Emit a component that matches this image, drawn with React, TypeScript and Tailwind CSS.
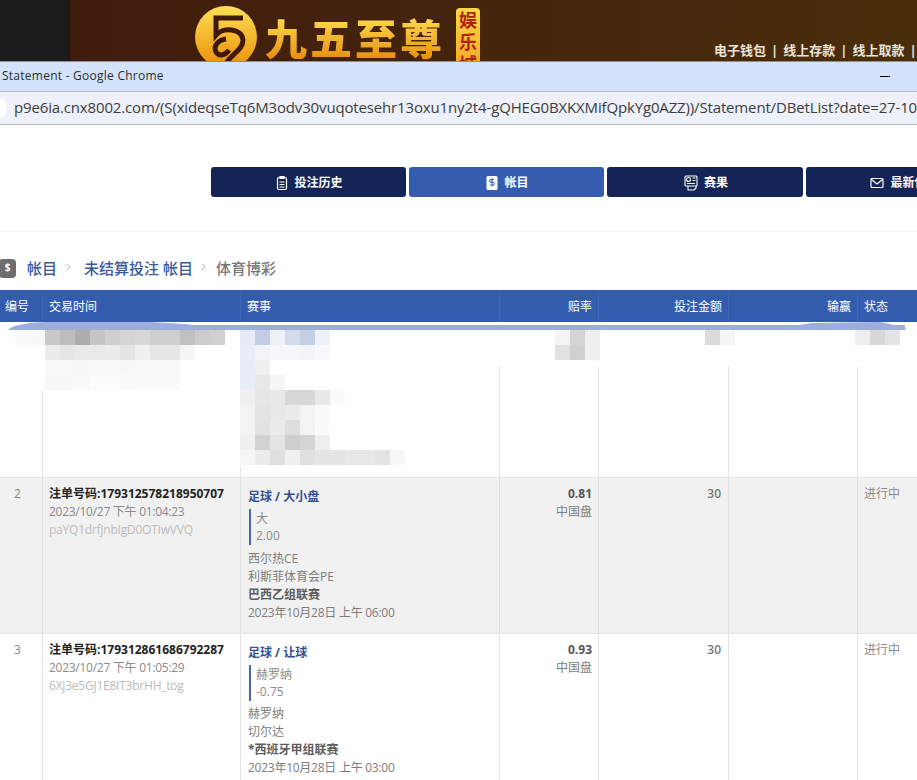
import React from "react";

const FONT = "[font-family:'Open_Sans','Noto_Sans_CJK_SC',sans-serif]";

const cell = "border-l border-[#e2e2e2]";

function HistoryIcon() {
  return (
    <svg width="12" height="16" viewBox="0 0 12 16" fill="none" stroke="#fff" strokeWidth="1.2">
      <rect x="1.5" y="2.5" width="9" height="12" rx="1.5" />
      <path d="M4 1.5h4v2H4zM3.5 7h5M3.5 9.5h5M3.5 12h5" />
    </svg>
  );
}
function LedgerIcon() {
  return (
    <svg width="12" height="16" viewBox="0 0 12 16">
      <rect x="0.5" y="1" width="11" height="14" rx="1.5" fill="#fff" />
      <path d="M8 4.5H5a1 1 0 0 0 0 2.8h2a1 1 0 0 1 0 2.8H4M6 3.5v8" fill="none" stroke="#355cae" strokeWidth="1" />
    </svg>
  );
}
function ResultIcon() {
  return (
    <svg width="14" height="16" viewBox="0 0 14 16" fill="none" stroke="#fff" strokeWidth="1.1">
      <rect x="1" y="1" width="12" height="10" rx="1" />
      <circle cx="4.5" cy="4.5" r="2" />
      <path d="M8.5 3h3M8.5 5.5h3M3 8.5h8M4 11v4h6l2-2v-2" />
    </svg>
  );
}
function MailIcon() {
  return (
    <svg width="14" height="12" viewBox="0 0 14 12" fill="none" stroke="#fff" strokeWidth="1.2">
      <rect x="1" y="1.5" width="12" height="9" rx="1" />
      <path d="M1.5 2.5 7 7l5.5-4.5" />
    </svg>
  );
}

function Tab({ label, icon, active, wide }: { label: string; icon: React.ReactNode; active?: boolean; wide?: boolean }) {
  return (
    <div
      className={`flex h-[30px] shrink-0 items-center justify-center gap-[6px] rounded-[3px] pl-[2px] pt-px text-xs font-bold text-white ${
        wide ? "w-[196px]" : "w-[195px]"
      } ${active ? "bg-[#355cae]" : "bg-[#142456]"}`}
    >
      {icon}
      <span className="whitespace-nowrap">{label}</span>
    </div>
  );
}

type Bet = {
  n: string; id: string; time: string; ref: string; sport: string; pick: string; hcp: string;
  home: string; away: string; league: string; date: string; odds: string; bg: string; h: string; mb: string;
};

function BetRow({ b }: { b: Bet }) {
  return (
    <div className={`grid grid-cols-[42px_198px_259px_99px_130px_129px_60px] border-b border-[#e2e2e2] text-xs leading-[18px] text-[#7c7c7c] ${b.bg} ${b.h}`}>
      <div className="pt-[7px] pl-[14px] text-[#888]">{b.n}</div>
      <div className={`${cell} pl-[6px] pt-[7px]`}>
        <div className="whitespace-nowrap font-bold text-[#222]">注单号码:{b.id}</div>
        <div className="whitespace-nowrap tracking-[-0.27px] text-[#8a8a8a]">{b.time}</div>
        <div className="whitespace-nowrap tracking-[-0.23px] text-[#bbb]">{b.ref}</div>
      </div>
      <div className={`${cell} pl-[7px] pt-[10px]`}>
        <div className="font-bold text-[#32508f]">{b.sport}</div>
        <div className={`ml-px mt-[3px] h-[36px] border-l-2 border-[#4a69ad] pl-[5px] pt-px text-[#8a8a8a] ${b.mb}`}>
          <div>{b.pick}</div>
          <div className="-mt-px">{b.hcp}</div>
        </div>
        <div>{b.home}</div>
        <div>{b.away}</div>
        <div className="font-bold text-[#5c5c5c]">{b.league}</div>
        <div className="whitespace-nowrap tracking-[-0.26px]">{b.date}</div>
      </div>
      <div className={`${cell} pr-[6px] pt-[7px] text-right`}>
        <div className="font-bold text-[#555]">{b.odds}</div>
        <div>中国盘</div>
      </div>
      <div className={`${cell} pr-[7px] pt-[7px] text-right font-semibold text-[#777]`}>30</div>
      <div className={cell} />
      <div className={`${cell} pl-[6px] pt-[7px] text-[#8a8a8a]`}>进行中</div>
    </div>
  );
}

const mosaic: [number, number, string[]][] = [
  [45, 330, ["#c8c8c8", "#bdbdbd", "#adadad", "#c5c5c5", "#cfcfcf", "#d5d5d5", "#d8d8d8", "#cfcfcf", "#cfcfcf", "#c0c0c0", "#cbcbcb", "#d0d0d0"]],
  [45, 345, ["#ececec", "#e6e6e6", "#eaeaea", "#eaeaea", "#ececec", "#e4e4e4", "#f0f0f0", "#e6e6e6", "#e6e6e6", "#f5f5f5"]],
  [45, 360, ["#f9f9f9", "#f9f9f9", "#f8f8f8", "#f9f9f9", "#f9f9f9", "#f8f8f8", "#f9f9f9", "#f9f9f9", "#f9f9f9"]],
  [45, 375, ["#f8f8f8", "#f8f8f8", "#f9f9f9", "#fcfcfc", "#fcfcfc", "#fbfbfb", "#f9f9f9", "#f9f9f9", "#f9f9f9"]],
  [15, 330, ["#fafafa", "#f8f8f8"]],
  [240, 330, ["#e6ebf5", "#c3cde3", "#eef1f8", "#d3dbed", "#c3cfe4", "#eef1f8"]],
  [240, 345, ["#e9edf7", "#f2f4fa", "#f6f7fb", "#f6f7fb", "#f2f4fa", "#f8f9fc"]],
  [240, 360, ["#e9edf7", "#f0f0f0"]],
  [240, 375, ["#e9edf7", "#e8e8e8", "#f5f5f5"]],
  [240, 390, ["#f0f0f0", "#e6e6e6", "#e8e8e8", "#d8d8d8", "#d8d8d8", "#e8e8e8", "#fafafa"]],
  [240, 405, ["#f3f3f3", "#e4e4e4", "#e8e8e8", "#ebebeb", "#f3f3f3", "#fafafa"]],
  [240, 420, ["#f3f3f3", "#e2e2e2", "#ebebeb", "#dedede", "#f3f3f3", "#fbfbfb"]],
  [240, 435, ["#efefef", "#d2d2d2", "#e4e4e4", "#cfcfcf", "#d4d4d4", "#eeeeee"]],
  [240, 450, ["#f6f6f6", "#ececec", "#dfdfdf", "#f0f0f0", "#e0e0e0", "#e4e4e4", "#e4e4e4", "#e8e8e8", "#e8e8e8", "#e4e4e4", "#f7f7f7"]],
  [555, 330, ["#f4f4f4", "#d5d5d5", "#eeeeee"]],
  [555, 345, ["#e2e2e2", "#d0d0d0", "#efefef"]],
  [705, 330, ["#dcdcdc", "#f5f5f5"]],
  [855, 330, ["#eeeeee", "#d8d8d8", "#e4e4e4"]],
];

function Redacted() {
  return (
    <svg className="absolute left-0 top-0" width="917" height="155" viewBox="0 322 917 155">
      <rect x="0" y="322" width="917" height="44" fill="#fff" />
      <rect x="30" y="366" width="14" height="24" fill="#fff" />
      <rect x="225" y="366" width="30" height="100" fill="#fff" />
      {mosaic.flatMap(([x, y, row]) =>
        row.map((c, i) => <rect key={`${x}-${y}-${i}`} x={x + i * 15} y={y} width="15" height="15" fill={c} />)
      )}
      <path
        d="M8 330C12 326 22 323 45 322L150 322C170 323 185 324 195 325L905 325L905 330Z"
        fill="#9dafd9"
      />
      <path d="M777 330C785 326 800 325 812 323L880 322C892 324 900 327 907 330Z" fill="#9dafd9" />
    </svg>
  );
}

export default function App() {
  return (
    <div className={`h-[780px] w-[917px] overflow-hidden bg-white ${FONT}`}>
      {/* site banner */}
      <div className="flex h-[61px]">
        <div className="w-[70px] bg-[#1c1b1b]" />
        <div className="relative flex flex-1 items-start overflow-hidden bg-gradient-to-r from-[#401c0d] to-[#4a2e0b] pl-[125px] pt-[6px]">
          <svg width="62" height="62" viewBox="0 0 62 62" className="shrink-0">
            <defs>
              <linearGradient id="gold" x1="0" y1="0" x2="0" y2="1">
                <stop offset="0" stopColor="#ffdf55" />
                <stop offset="1" stopColor="#e98f05" />
              </linearGradient>
            </defs>
            <circle cx="31" cy="31" r="31" fill="url(#gold)" />
            <path
              d="M48 12H21V29C28 21 47 22 48 34C48 44 36 48 29 60"
              fill="none"
              stroke="#3d1a0a"
              strokeWidth="5"
            />
            <path d="M31 33C23 34 18 40 21 46C24 51 31 49 34 44" fill="none" stroke="#3d1a0a" strokeWidth="5" />
          </svg>
          <div className="ml-[8px] mt-[7px] whitespace-nowrap bg-gradient-to-b from-[#ffe24f] to-[#e58c05] bg-clip-text text-[42px] font-black leading-[48px] tracking-[3px] text-transparent [font-family:'Noto_Sans_CJK_SC',sans-serif]">
            九五至尊
          </div>
          <div className="ml-[11px] mt-[2px] flex h-[70px] w-[24px] shrink-0 justify-center rounded-[4px] bg-gradient-to-b from-[#ffd84a] to-[#eda015] pt-[3px] text-[18px] font-bold leading-[24px] text-[#b3220f] [font-family:'Noto_Sans_CJK_SC',sans-serif]">
            <span className="whitespace-nowrap tracking-[4px] [writing-mode:vertical-rl]">娱乐城</span>
          </div>
          <div className="absolute left-[644px] top-[41px] flex gap-[5px] whitespace-nowrap text-[13px] font-bold leading-[18px] text-[#ece3d8]">
            <span>电子钱包</span><span>|</span><span>线上存款</span><span>|</span><span>线上取款</span><span>|</span>
          </div>
        </div>
      </div>

      {/* chrome popup title */}
      <div className="flex h-[30px] items-center justify-between border-t border-[#8f8f8f] bg-[#d3e3fb] pb-px pl-[2px] pr-[27px] text-xs text-[#2c2c2c]">
        <span className="tracking-[0.25px]">Statement - Google Chrome</span>
        <span className="h-px w-[10px] bg-black" />
      </div>

      {/* address bar */}
      <div className="relative flex h-[34px] items-center overflow-hidden border-y border-[#b9bcc2] bg-[#eef1f9] pb-[2px] pl-[14px] text-[15px] tracking-[-0.15px] text-[#3c3c3c]">
        <span className="absolute left-[-9px] top-[7px] h-[18px] w-[16px] rounded-full bg-white" />
        <span className="whitespace-nowrap">
          p9e6ia.cnx8002.com/(S(xideqseTq6M3odv30vuqotesehr13oxu1ny2t4-gQHEG0BXKXMifQpkYg0AZZ))/Statement/DBetList?date=27-10-2
        </span>
      </div>

      {/* tabs */}
      <div className="flex gap-[3px] overflow-hidden border-b border-[#f5f5f5] pl-[211px] pb-[34px] pt-[42px]">
        <Tab label="投注历史" icon={<HistoryIcon />} />
        <Tab label="帐目" icon={<LedgerIcon />} active />
        <Tab label="赛果" icon={<ResultIcon />} wide />
        <Tab label="最新信息" icon={<MailIcon />} />
      </div>

      {/* breadcrumb */}
      <div className="flex h-[58px] items-center pt-[14px] text-[15px] leading-5">
        <span className="ml-[-1px] flex h-[19px] w-[17px] items-start justify-center rounded-[4px] bg-[#6e6e6e] pt-[1px] text-[10px] font-bold leading-[14px] text-white">$</span>
        <span className="ml-[11px] font-medium text-[#3a5a9e]">帐目</span>
        <svg width="6" height="8" viewBox="0 0 6 8" className="ml-[9px] mr-[12px] mb-[2px]" fill="none" stroke="#b5b5b5">
          <path d="M1 1l3 3-3 3" />
        </svg>
        <span className="font-medium text-[#3a5a9e]">未结算投注 帐目</span>
        <svg width="6" height="8" viewBox="0 0 6 8" className="ml-[8px] mr-[9px] mb-[2px]" fill="none" stroke="#b5b5b5">
          <path d="M1 1l3 3-3 3" />
        </svg>
        <span className="font-medium text-[#777]">体育博彩</span>
      </div>

      {/* table header */}
      <div className="grid h-[32px] grid-cols-[42px_198px_259px_99px_130px_129px_60px] items-center bg-[#345cae] pt-px text-xs text-white">
        <div className="pl-[5px]">编号</div>
        <div className="flex h-full items-center border-l border-[#3f65b3] pl-[6px]">交易时间</div>
        <div className="flex h-full items-center border-l border-[#3f65b3] pl-[6px]">赛事</div>
        <div className="flex h-full items-center justify-end border-l border-[#3f65b3] pr-[6px]">赔率</div>
        <div className="flex h-full items-center justify-end border-l border-[#3f65b3] pr-[6px]">投注金额</div>
        <div className="flex h-full items-center justify-end border-l border-[#3f65b3] pr-[6px]">输赢</div>
        <div className="flex h-full items-center border-l border-[#3f65b3] pl-[6px]">状态</div>
      </div>

      {/* redacted row */}
      <div className="relative grid h-[156px] grid-cols-[42px_198px_259px_99px_130px_129px_60px] border-b border-[#e2e2e2]">
        <div />
        <div className={cell} />
        <div className={cell} />
        <div className={cell} />
        <div className={cell} />
        <div className={cell} />
        <div className={cell} />
        <Redacted />
      </div>

      <BetRow
        b={{
          n: "2", id: "179312578218950707", time: "2023/10/27 下午 01:04:23", ref: "paYQ1drfJnbIgD0OTIwVVQ",
          sport: "足球 / 大小盘", pick: "大", hcp: "2.00", home: "西尔热CE", away: "利斯菲体育会PE",
          league: "巴西乙组联赛", date: "2023年10月28日 上午 06:00", odds: "0.81", bg: "bg-[#f1f1f1]", h: "h-[156px]", mb: "mb-[5px]",
        }}
      />
      <BetRow
        b={{
          n: "3", id: "179312861686792287", time: "2023/10/27 下午 01:05:29", ref: "6Xj3e5GJ1E8IT3brHH_tog",
          sport: "足球 / 让球", pick: "赫罗纳", hcp: "-0.75", home: "赫罗纳", away: "切尔达",
          league: "*西班牙甲组联赛", date: "2023年10月28日 上午 03:00", odds: "0.93", bg: "bg-white", h: "h-[156px]", mb: "mb-[4px]",
        }}
      />
    </div>
  );
}
